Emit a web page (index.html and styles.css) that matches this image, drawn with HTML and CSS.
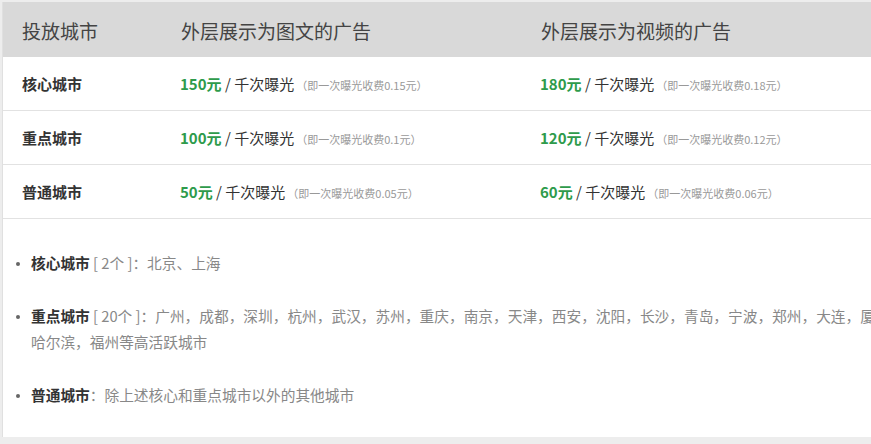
FILE: index.html
```html
<!DOCTYPE html>
<html lang="zh-CN">
<head>
<meta charset="utf-8">
<title>投放城市</title>
<link rel="stylesheet" href="styles.css">
</head>
<body>
<div class="card">
  <div class="price-table">
    <div class="cell head c1">投放城市</div>
    <div class="cell head">外层展示为图文的广告</div>
    <div class="cell head">外层展示为视频的广告</div>

    <div class="cell label c1">核心城市</div>
    <div class="cell"><span class="line"><span class="price">150元</span> / 千次曝光<span class="note">（即一次曝光收费0.15元）</span></span></div>
    <div class="cell"><span class="line"><span class="price">180元</span> / 千次曝光<span class="note">（即一次曝光收费0.18元）</span></span></div>

    <div class="cell label c1">重点城市</div>
    <div class="cell"><span class="line"><span class="price">100元</span> / 千次曝光<span class="note">（即一次曝光收费0.1元）</span></span></div>
    <div class="cell"><span class="line"><span class="price">120元</span> / 千次曝光<span class="note">（即一次曝光收费0.12元）</span></span></div>

    <div class="cell label c1">普通城市</div>
    <div class="cell"><span class="line"><span class="price">50元</span> / 千次曝光<span class="note">（即一次曝光收费0.05元）</span></span></div>
    <div class="cell"><span class="line"><span class="price">60元</span> / 千次曝光<span class="note">（即一次曝光收费0.06元）</span></span></div>
  </div>

  <ul class="city-list">
    <li><b>核心城市</b> [ 2个 ]：北京、上海</li>
    <li><b>重点城市</b> [ 20个 ]：广州，成都，深圳，杭州，武汉，苏州，重庆，南京，天津，西安，沈阳，长沙，青岛，宁波，郑州，大连，厦门，哈尔滨，福州等高活跃城市</li>
    <li><b>普通城市</b>：除上述核心和重点城市以外的其他城市</li>
  </ul>
</div>
</body>
</html>
```
FILE: styles.css
```css
html, body {
  margin: 0;
  padding: 0;
}
body {
  background: #ededed;
  padding: 2px 0 0 2px;
  overflow: hidden;
  font-family: "Noto Sans CJK SC", "Noto Sans", sans-serif;
  color: #333;
}
.card {
  width: 1100px;
  background: #fff;
  border-left: 1px solid #e0e0e0;
}
.price-table {
  display: grid;
  grid-template-columns: 158px 360px 1fr;
}
.cell {
  height: 53px;
  display: flex;
  align-items: center;
  padding-left: 19px;
  border-bottom: 1px solid #e2e2e2;
  font-size: 15px;
  white-space: nowrap;
}
.cell.head {
  background: #d9d9d9;
  border-bottom: 0;
  font-size: 19px;
  color: #444;
  padding-left: 20px;
  padding-top: 1px;
  box-sizing: border-box;
  height: 55px;
}
.cell.head.c1 {
  padding-left: 19px;
}
.cell.label {
  font-weight: bold;
  color: #333;
}
.line {
  color: #333;
  font-size: 15px;
}
.price {
  color: #2e9b4b;
  font-weight: bold;
  font-size: 15px;
}
.note {
  color: #999;
  font-size: 11px;
  margin-left: 2px;
}
.city-list {
  margin: 0;
  padding: 31px 0 29px 28px;
  width: 884px;
  font-size: 14.7px;
  line-height: 26px;
  color: #888;
  list-style: none;
}
.city-list li {
  position: relative;
  margin-bottom: 27px;
}
.city-list li:last-child {
  margin-bottom: 0;
}
.city-list li::before {
  content: "";
  position: absolute;
  left: -15px;
  top: 12px;
  width: 4px;
  height: 4px;
  border-radius: 50%;
  background: #666;
}
.city-list b {
  color: #333;
  font-weight: bold;
}
```
